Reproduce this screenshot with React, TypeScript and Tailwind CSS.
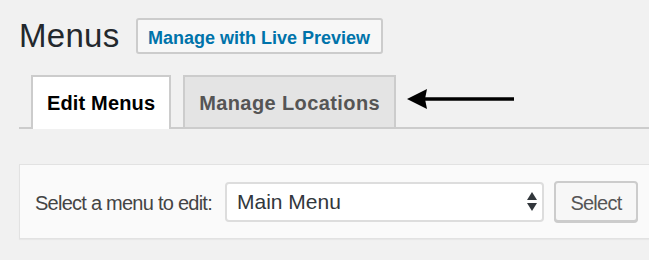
import * as React from 'react'

function UpDownArrows() {
  return (
    <svg width="10" height="19" viewBox="0 0 10 19" className="shrink-0">
      <polygon points="5,0 10,8 0,8" fill="#32373c" />
      <polygon points="0,11 10,11 5,19" fill="#32373c" />
    </svg>
  )
}

function PointerArrow() {
  return (
    <svg width="112" height="24" viewBox="0 0 112 24" className="absolute left-[405px] top-[87px]">
      <polygon points="2,12 22,2 20,12 22,22" fill="#000" />
      <line x1="18" y1="12" x2="109" y2="12" stroke="#000" strokeWidth="3.5" />
    </svg>
  )
}

export default function App() {
  return (
    <div
      className="relative w-full h-[260px] overflow-hidden bg-[#f1f1f1] pl-[19px] pt-[18px]"
      style={{ fontFamily: '"Liberation Sans", Arial, sans-serif' }}
    >
      <div className="flex items-start">
        <h1 className="text-[33px] leading-[36px] font-normal tracking-[0.3px] text-[#23282d]">Menus</h1>
        <button className="ml-[16px] flex h-[36px] w-[247px] items-center justify-center rounded-[3px] border-2 border-[#ccc] bg-[#f7f7f7] pt-[4px] text-[18px] leading-[18px] font-bold text-[#0073aa]">
          Manage with Live Preview
        </button>
      </div>

      <div className="mt-[21px] flex items-end border-b-2 border-[#ccc] pl-3">
        <div className="relative -mb-[2px] h-[54px] border-2 border-b-0 border-[#ccc] bg-white px-[14px] pt-[16px] text-[20px] leading-[20px] font-bold tracking-[0.15px] text-black">
          Edit Menus
        </div>
        <div className="ml-3 h-[52px] border-2 border-b-0 border-[#ccc] bg-[#e4e4e4] px-[14px] pt-[16px] text-[20px] leading-[20px] font-bold tracking-[0.4px] text-[#555]">
          Manage Locations
        </div>
      </div>

      <div className="mt-[35px] -mr-[20px] flex h-[75px] items-center border border-[#e2e2e2] bg-[#fafafa] pl-[15px] shadow-[0_1px_1px_rgba(0,0,0,0.04)]">
        <span className="pt-[3px] text-[20px] leading-[20px] tracking-[-0.75px] text-[#444]">
          Select a menu to edit:
        </span>
        <div className="ml-[13px] flex h-[40px] w-[319px] items-center justify-between rounded-[4px] border-2 border-[#ddd] bg-white pl-[10px] pr-[5px] text-[21px] leading-[21px] text-[#32373c]">
          <span>Main Menu</span>
          <UpDownArrows />
        </div>
        <button className="ml-[10px] flex h-[41px] w-[84px] items-center justify-center rounded-[4px] border-2 border-[#ccc] bg-[#f7f7f7] pt-[3px] text-[20px] leading-[20px] tracking-[-0.75px] text-[#555] shadow-[0_1px_0_#ccc]">
          Select
        </button>
      </div>

      <PointerArrow />
    </div>
  )
}
